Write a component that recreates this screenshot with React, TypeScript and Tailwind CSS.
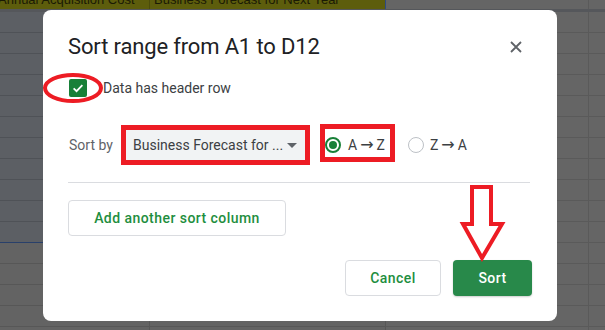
import React from "react";

const rows = Array.from({ length: 16 }, (_, i) => i);

export default function App() {
  return (
    <div className="relative w-[605px] h-[330px] overflow-hidden bg-[#656565] font-['Roboto',sans-serif]">
      {/* spreadsheet background */}
      <div className="flex h-[9px]">
        <div className="w-[150px] bg-[#5d5d0c] border-r border-[#4c4c0a] overflow-hidden">
          <div className="-mt-[8px] -ml-[2px] text-[13px] leading-[15px] text-[#1a1a04] font-['Liberation_Sans',Arial,sans-serif] whitespace-nowrap">
            Annual Acquisition Cost
          </div>
        </div>
        <div className="w-[236px] bg-[#5d5d0c] border-r border-[#2c4a86] overflow-hidden">
          <div className="-mt-[8px] pl-[4px] text-[13px] leading-[15px] text-[#1a1a04] font-['Liberation_Sans',Arial,sans-serif] whitespace-nowrap">
            Business Forecast for Next Year
          </div>
        </div>
        <div className="w-[203px] border-r border-[#5a5a5a]" />
        <div className="flex-1" />
      </div>
      <div className="h-[3px] bg-[#55575b]" />
      {rows.map((i) => {
        const sel = i < 11;
        return (
          <div key={i} className="flex h-[21px]">
            <div
              className={
                sel
                  ? i === 10
                    ? "w-[150px] bg-[#5c5f64] border-b border-[#29406a]"
                    : "w-[150px] bg-[#5c5f64] border-b border-[#4f5257]"
                  : "w-[150px] bg-[#636363] border-b border-r border-[#575757]"
              }
            />
            <div
              className={
                sel
                  ? i === 10
                    ? "w-[236px] bg-[#5c5f64] border-b border-[#29406a]"
                    : "w-[236px] bg-[#5c5f64] border-b border-[#4f5257]"
                  : "w-[236px] bg-[#636363] border-b border-r border-[#575757]"
              }
            />
            <div className="w-[203px] border-b border-r border-[#5a5a5a]" />
            <div className="flex-1 border-b border-[#5a5a5a]" />
          </div>
        );
      })}

      {/* dialog */}
      <div className="absolute left-[43px] top-[10px] w-[514px] h-[311px] rounded-[8px] bg-white px-[25px] pt-[23px] flex flex-col">
        <div className="flex items-center justify-between h-[28px]">
          <div className="text-[22px] leading-[28px] text-[#202124] tracking-[-0.15px]">Sort range from A1 to D12</div>
          <div className="w-[24px] h-[24px] mr-[4px] flex items-center justify-center">
            <svg width="12" height="12" viewBox="0 0 12 12">
              <path d="M1 1 L11 11 M11 1 L1 11" stroke="#5f6368" strokeWidth="1.8" />
            </svg>
          </div>
        </div>

        <div className="mt-[18px] flex items-center h-[18px]">
          <div className="ml-[1px] w-[18px] h-[18px] rounded-[2px] bg-[#188038] flex items-center justify-center">
            <svg width="14" height="14" viewBox="0 0 24 24">
              <path d="M4.5 12.5 L9.5 17.5 L19.5 7" stroke="white" strokeWidth="3" fill="none" />
            </svg>
          </div>
          <div className="ml-[16px] text-[14px] text-[#3c4043]">Data has header row</div>
        </div>

        <div className="mt-[30px] flex items-center h-[36px]">
          <div className="w-[57px] pl-[1px] text-[14px] text-[#5f6368]">Sort by</div>
          <div className="w-[181px] h-[36px] bg-[#f1f3f4] rounded-[4px] flex items-center pl-[8px] pr-[8px] justify-between">
            <span className="text-[14px] text-[#3c4043] whitespace-nowrap">Business Forecast for ...</span>
            <svg width="10" height="5" viewBox="0 0 10 5" className="mr-[1px]">
              <path d="M0 0 L10 0 L5 5 Z" fill="#5f6368" />
            </svg>
          </div>
          <div className="ml-[19px] flex items-center">
            <div className="w-[16px] h-[16px] rounded-full border-2 border-[#188038] flex items-center justify-center">
              <div className="w-[8px] h-[8px] rounded-full bg-[#188038]" />
            </div>
            <span className="ml-[7px] text-[14px] text-[#3c4043] whitespace-nowrap flex items-center">
              A<span className="mx-[3px] font-['DejaVu_Sans',sans-serif] text-[16px] leading-[16px]">→</span>Z
            </span>
            <div className="ml-[23px] w-[16px] h-[16px] rounded-full border-[1.5px] border-[#bdc1c6]" />
            <span className="ml-[6px] text-[14px] text-[#3c4043] whitespace-nowrap flex items-center">
              Z<span className="mx-[3px] font-['DejaVu_Sans',sans-serif] text-[16px] leading-[16px]">→</span>A
            </span>
          </div>
        </div>

        <div className="mt-[19px] w-[462px] h-px bg-[#dadce0]" />

        <div className="mt-[17px] w-[218px] h-[36px] rounded-[4px] border border-[#dadce0] flex items-center justify-center text-[14px] font-medium tracking-[0.45px] text-[#1e8e3e]">
          Add another sort column
        </div>

        <div className="mt-[24px] flex justify-end gap-[12px]">
          <div className="w-[96px] h-[36px] rounded-[4px] border border-[#dadce0] flex items-center justify-center text-[14px] font-medium tracking-[0.45px] text-[#1e8e3e]">
            Cancel
          </div>
          <div className="w-[79px] h-[36px] rounded-[4px] bg-[#28894a] shadow-[0_1px_2px_rgba(0,0,0,0.2)] flex items-center justify-center text-[14px] font-medium tracking-[0.45px] text-white">
            Sort
          </div>
        </div>
      </div>

      {/* red annotations */}
      <svg className="absolute left-0 top-0 pointer-events-none" width="605" height="330" viewBox="0 0 605 330">
        <ellipse cx="73" cy="88" rx="28" ry="13" fill="none" stroke="#ed1c24" strokeWidth="4" />
        <rect x="123.5" y="127.5" width="184" height="35" fill="none" stroke="#ed1c24" strokeWidth="5" />
        <rect x="322.5" y="126.5" width="70" height="33" fill="none" stroke="#ed1c24" strokeWidth="5" />
        <polygon
          points="472,187 491,187 491,224 502,224 482,258 463,224 472,224"
          fill="none"
          stroke="#ed1c24"
          strokeWidth="4"
          strokeLinejoin="miter"
        />
      </svg>
    </div>
  );
}
